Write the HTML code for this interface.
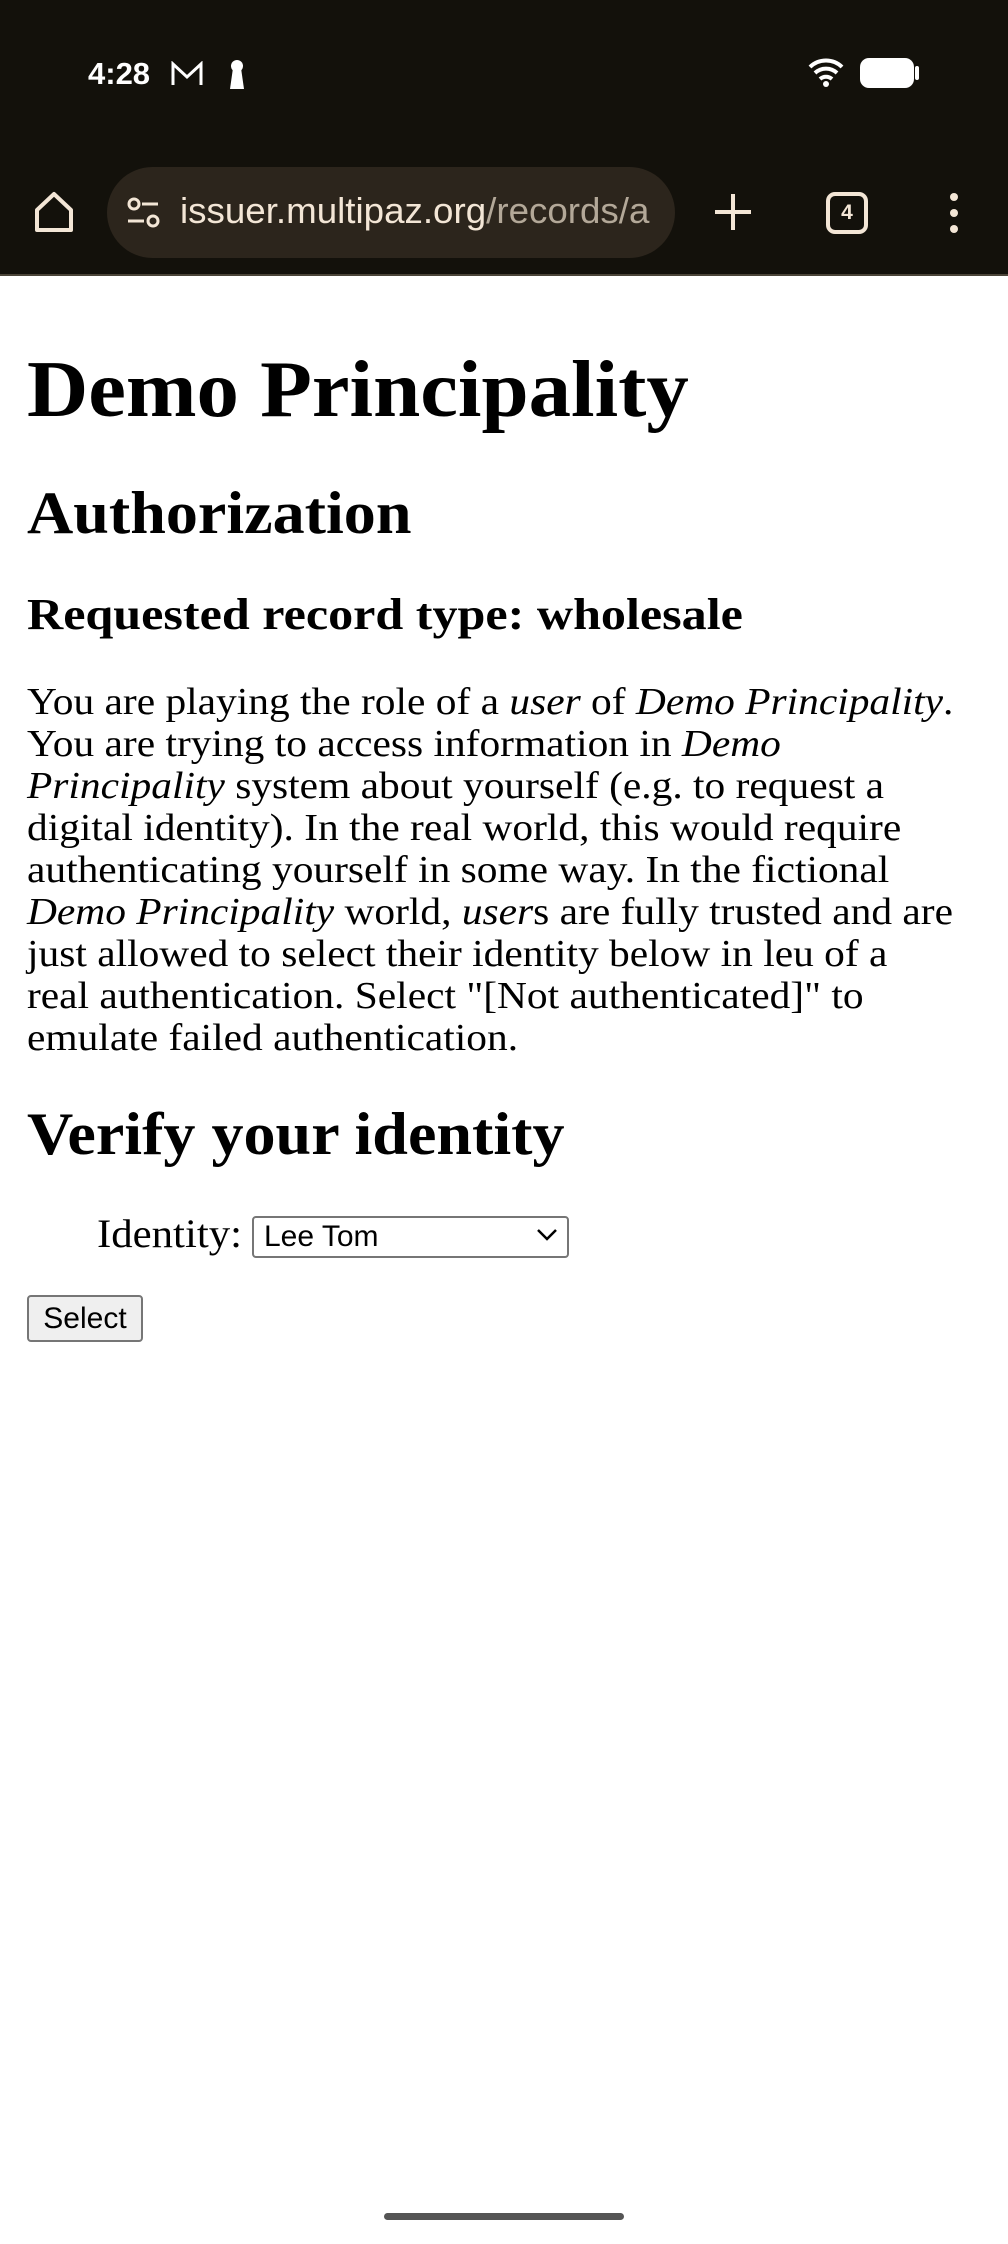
<!DOCTYPE html>
<html><head><meta charset="utf-8"><style>
body{margin:0;width:1008px;height:2244px;background:#fff;position:relative;overflow:hidden;font-family:"Liberation Serif",serif;color:#000}
.a{position:absolute;white-space:nowrap;line-height:1;transform-origin:0 0}
.top{position:absolute;left:0;top:0;width:1008px;height:274px;background:#13110b}
.line{position:absolute;left:0;top:274px;width:1008px;height:2px;background:#4a4438}
.sans{font-family:"Liberation Sans",sans-serif}
.b{font-weight:bold}
.body{font-size:38px}
</style></head><body>
<div class="top"></div><div class="line"></div>
<div class="a sans b" style="left:88px;top:58px;font-size:31px;color:#fff">4:28</div>
<svg class="a" style="left:170px;top:61px" width="34" height="26" viewBox="0 0 34 26"><path d="M3 24V3l14 13L31 3v21" fill="none" stroke="#fff" stroke-width="3"/></svg>
<svg class="a" style="left:226px;top:58px" width="22" height="32" viewBox="0 0 22 32"><circle cx="11" cy="8" r="6" fill="#fff"/><path d="M7 10h8l3 21H4z" fill="#fff"/></svg>
<svg class="a" style="left:808px;top:57px" width="36" height="30" viewBox="0 0 36 30"><path d="M2 10a23 23 0 0 1 32 0M7 16a16 16 0 0 1 22 0M12 22a9 9 0 0 1 12 0" fill="none" stroke="#fff" stroke-width="4"/><circle cx="18" cy="27" r="3" fill="#fff"/></svg>
<div class="a" style="left:860px;top:58px;width:54px;height:30px;background:#fff;border-radius:9px"></div>
<div class="a" style="left:915px;top:66px;width:4px;height:14px;background:#fff;border-radius:2px"></div>
<svg class="a" style="left:32px;top:190px" width="44" height="44" viewBox="0 0 44 44"><path d="M5 20L22 4l17 16v20H5z" fill="none" stroke="#f3e6d6" stroke-width="4" stroke-linejoin="round"/></svg>
<div class="a" style="left:107px;top:167px;width:568px;height:91px;background:#2c251c;border-radius:46px"></div>
<svg class="a" style="left:126px;top:197px" width="36" height="32" viewBox="0 0 36 32"><circle cx="8" cy="7" r="5" fill="none" stroke="#f3e6d6" stroke-width="3"/><path d="M16 7h16M2 24h16" stroke="#f3e6d6" stroke-width="3"/><circle cx="27" cy="24" r="5" fill="none" stroke="#f3e6d6" stroke-width="3"/></svg>
<div class="a sans" style="left:180px;top:193px;font-size:36px;color:#f3e6d6;transform:scaleX(1.02)">issuer.multipaz.org<span style="color:#b3a898">/records/a</span></div>
<svg class="a" style="left:713px;top:192px" width="40" height="40" viewBox="0 0 40 40"><path d="M20 2v36M2 20h36" stroke="#f3e6d6" stroke-width="4"/></svg>
<div class="a sans b" style="left:826px;top:192px;width:34px;height:34px;border:4px solid #f3e6d6;border-radius:9px;color:#f3e6d6;font-size:21px;line-height:34px;text-align:center">4</div>
<svg class="a" style="left:946px;top:192px" width="16" height="42" viewBox="0 0 16 42"><circle cx="8" cy="5" r="4" fill="#f3e6d6"/><circle cx="8" cy="21" r="4" fill="#f3e6d6"/><circle cx="8" cy="37" r="4" fill="#f3e6d6"/></svg>

<div class="a b" style="left:27px;top:350px;font-size:80px;transform:scaleX(1.06)">Demo Principality</div>
<div class="a b" style="left:27px;top:483px;font-size:60px;transform:scaleX(1.068)">Authorization</div>
<div class="a b" style="left:27px;top:593px;font-size:44px;transform:scaleX(1.139)">Requested record type: wholesale</div>
<div class="a body" style="left:27px;top:681px;line-height:42px;transform:scaleX(1.09)">
You are playing the role of a <i>user</i> of <i>Demo Principality</i>.<br>
You are trying to access information in <i>Demo</i><br>
<i>Principality</i> system about yourself (e.g. to request a<br>
digital identity). In the real world, this would require<br>
authenticating yourself in some way. In the fictional<br>
<i>Demo Principality</i> world, <i>user</i>s are fully trusted and are<br>
just allowed to select their identity below in leu of a<br>
real authentication. Select "[Not authenticated]" to<br>
emulate failed authentication.</div>
<div class="a b" style="left:27px;top:1104px;font-size:60px;transform:scaleX(1.068)">Verify your identity</div>
<div class="a" style="left:97px;top:1214px;font-size:40px;transform:scaleX(1.07)">Identity:</div>
<div class="a sans" style="left:252px;top:1216px;width:313px;height:38px;border:2px solid #767676;border-radius:4px;font-size:30px;line-height:38px;text-indent:10px">Lee Tom</div>
<svg class="a" style="left:536px;top:1228px" width="22" height="14" viewBox="0 0 22 14"><path d="M2 2l9 9 9-9" fill="none" stroke="#000" stroke-width="2.5"/></svg>
<div class="a sans" style="left:27px;top:1295px;width:112px;height:43px;border:2px solid #767676;border-radius:4px;background:#efefef;font-size:30px;line-height:43px;text-align:center">Select</div>
<div class="a" style="left:384px;top:2213px;width:240px;height:7px;background:#555;border-radius:4px"></div>
</body></html>
